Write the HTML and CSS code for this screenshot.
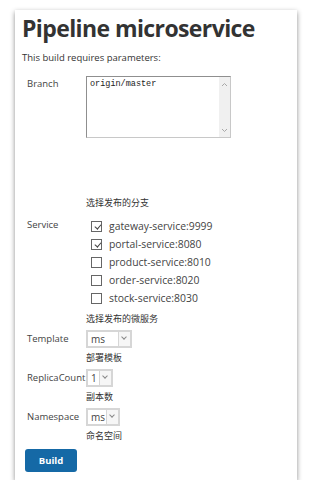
FILE: index.html
```html
<!DOCTYPE html>
<html lang="en">
<head>
<meta charset="UTF-8">
<meta name="viewport" content="width=device-width, initial-scale=1.0">
<title>Pipeline microservice</title>
<link rel="stylesheet" href="styles.css">
</head>
<body>
<div class="card">
    <h1>Pipeline microservice</h1>
    <p class="intro">This build requires parameters:</p>

    <div class="param param-branch">
        <div class="label">Branch</div>
        <div class="field">
            <div class="textarea-box">
                <textarea>origin/master</textarea>
                <div class="scrollbar">
                    <svg width="7" height="5" viewBox="0 0 7 5"><path d="M1 4 L3.5 1.5 L6 4" fill="none" stroke="#a8a8a8" stroke-width="1"/></svg>
                    <svg width="7" height="5" viewBox="0 0 7 5"><path d="M1 1 L3.5 3.5 L6 1" fill="none" stroke="#a8a8a8" stroke-width="1"/></svg>
                </div>
            </div>
            <div class="desc desc-branch">选择发布的分支</div>
        </div>
    </div>

    <div class="param">
        <div class="label">Service</div>
        <div class="field">
            <label class="check"><span class="box checked"></span>gateway-service:9999</label>
            <label class="check"><span class="box checked"></span>portal-service:8080</label>
            <label class="check"><span class="box"></span>product-service:8010</label>
            <label class="check"><span class="box"></span>order-service:8020</label>
            <label class="check"><span class="box"></span>stock-service:8030</label>
            <div class="desc">选择发布的微服务</div>
        </div>
    </div>

    <div class="param param-select">
        <div class="label">Template</div>
        <div class="field">
            <div class="select" style="width: 46px;"><span class="value">ms</span><span class="arrow"></span></div>
            <div class="desc">部署模板</div>
        </div>
    </div>

    <div class="param param-select">
        <div class="label">ReplicaCount</div>
        <div class="field">
            <div class="select" style="width: 27px;"><span class="value">1</span><span class="arrow"></span></div>
            <div class="desc">副本数</div>
        </div>
    </div>

    <div class="param param-select">
        <div class="label">Namespace</div>
        <div class="field">
            <div class="select" style="width: 34px;"><span class="value">ms</span><span class="arrow"></span></div>
            <div class="desc">命名空间</div>
        </div>
    </div>

    <button class="build">Build</button>
</div>
</body>
</html>
```

FILE: styles.css
```css
body {
    margin: 0;
    padding: 0;
    background-color: #fff;
    font-family: "Open Sans", "Noto Sans CJK SC", sans-serif;
    color: #333;
}

.card {
    margin: 10px 0 0 15px;
    width: 282px;
    height: 470px;
    box-sizing: border-box;
    padding: 3px 0 0 7px;
    background-color: #fff;
    box-shadow: 0 2px 5px rgba(0, 0, 0, 0.45);
}

h1 {
    margin: 0;
    font-size: 23px;
    letter-spacing: -0.6px;
    line-height: 30px;
    font-weight: 700;
    color: #333;
}

.intro {
    margin: 8px 0 0;
    font-size: 9.5px;
    line-height: 14px;
}

.param {
    display: grid;
    grid-template-columns: 59px auto;
    margin-left: 5px;
    font-size: 9.5px;
}

.param-branch {
    margin-top: 11px;
}

.label {
    line-height: 14px;
    padding-top: 1px;
    white-space: nowrap;
    color: #444;
}

.param-select .label {
    line-height: 18px;
    padding-top: 0;
}

.field {
    display: flex;
    flex-direction: column;
    align-items: flex-start;
}

.textarea-box {
    display: flex;
    width: 145px;
    height: 62px;
    box-sizing: border-box;
    border: 1px solid #c8c8c8;
    border-top-color: #8f8f8f;
    border-left-color: #8f8f8f;
}

.textarea-box textarea {
    flex: 1;
    border: none;
    resize: none;
    outline: none;
    padding: 1px 3px;
    font-family: "Liberation Mono", monospace;
    font-size: 8.5px;
    line-height: 12px;
    color: #222;
    overflow: hidden;
}

.scrollbar {
    width: 11px;
    background-color: #f0f0f0;
    display: flex;
    flex-direction: column;
    justify-content: space-between;
    align-items: center;
    padding: 5px 0 4px;
}

.desc {
    font-family: "Noto Sans CJK SC", sans-serif;
    font-size: 9px;
    line-height: 14px;
    margin: 3px 0 4px;
    color: #333;
}

.desc-branch {
    margin-top: 58px;
    margin-bottom: 7px;
}

.check {
    display: flex;
    align-items: center;
    height: 18px;
    padding-left: 5px;
    font-size: 10.4px;
    color: #444;
}

.check .box {
    width: 9px;
    height: 9px;
    border: 1px solid #666;
    margin-right: 7px;
    position: relative;
}

.check .box.checked::after {
    content: "";
    position: absolute;
    left: 2px;
    top: 0;
    width: 5px;
    height: 3px;
    border-left: 1px solid #444;
    border-bottom: 1px solid #444;
    transform: rotate(-50deg) translate(-1px, 2px);
}

.check + .desc {
    margin-top: 5px;
}

.select {
    display: flex;
    height: 18px;
    box-sizing: border-box;
    border: 2px solid #d6d6d6;
    background-color: #fff;
}

.select .value {
    flex: 1;
    padding-left: 3px;
    line-height: 14px;
    font-size: 10px;
    color: #444;
}

.select .arrow {
    width: 11px;
    border-left: 1px solid #d6d6d6;
    background-color: #f6f6f6;
    position: relative;
}

.select .arrow::after {
    content: "";
    position: absolute;
    left: 3px;
    top: 3px;
    width: 3px;
    height: 3px;
    border-right: 1px solid #888;
    border-bottom: 1px solid #888;
    transform: rotate(45deg);
}

.build {
    margin: 1px 0 0 3px;
    width: 52px;
    height: 23px;
    border: none;
    border-radius: 3px;
    background-color: #1569a6;
    color: #fff;
    font-family: "Open Sans", sans-serif;
    font-size: 9.5px;
    font-weight: 700;
    padding: 0;
}
```
